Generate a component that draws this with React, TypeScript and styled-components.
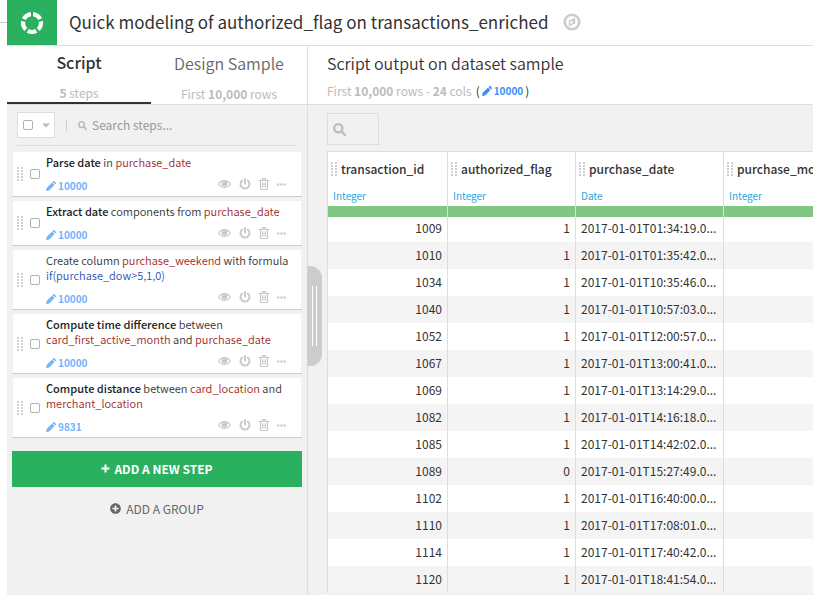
import React from 'react';
import styled, { createGlobalStyle } from 'styled-components';
import { FaCaretDown, FaPlusCircle } from 'react-icons/fa';

const sans = `"Source Sans Pro", "Noto Sans CJK SC", "Noto Sans", sans-serif`;

const GlobalStyle = createGlobalStyle`
  *, *::before, *::after { box-sizing: border-box; }
  html, body, #root { height: 100%; }
  body { margin: 0; background: #fff; color: #333; font: 12px/15px ${sans}; overflow: hidden; }
  button, input { font: inherit; color: inherit; }
  button { background: none; border: 0; padding: 0; cursor: pointer; }
  h1, h2, p, ul { margin: 0; padding: 0; font-weight: 400; }
`;

const Page = styled.div`
  height: 100%;
  display: flex;
  flex-direction: column;
`;

const Header = styled.header`
  display: flex;
  align-items: center;
  height: 46px;
  flex: none;
  border-bottom: 1px solid #ddd;
  margin-left: 7px;
`;

const Logo = styled.a`
  display: grid;
  place-items: center;
  width: 50px;
  height: 45px;
  background: #2ab160;
`;

const FlowLine = styled.span`
  position: absolute;
  left: 0;
  top: 22px;
  width: 7px;
  height: 1px;
  background: #ccc;
`;

const Title = styled.h1`
  margin-left: 12px;
  font-size: 17px;
  line-height: 24px;
  padding-bottom: 2px;
  white-space: nowrap;
`;

const CompassButton = styled.button`
  display: flex;
  margin-left: 15px;
  padding-bottom: 2px;
`;

const Body = styled.div`
  display: flex;
  flex: 1;
  min-height: 0;
  margin-left: 7px;
`;

const ScriptPanel = styled.aside`
  position: relative;
  display: flex;
  flex-direction: column;
  flex: none;
  width: 301px;
  border-right: 1px solid #ddd;
  background: #f1f1f1;
`;

const Tabs = styled.div`
  display: grid;
  grid-template-columns: 144px 1fr;
  height: 59px;
  background: #fff;
  border-bottom: 1px solid #ddd;
`;

const Tab = styled.button<{ $active?: boolean }>`
  display: flex;
  flex-direction: column;
  align-items: center;
  justify-content: flex-start;
  gap: 11px;
  padding-top: ${p => (p.$active ? 4 : 5)}px;
  height: 58px;
  color: ${p => (p.$active ? '#333' : '#666')};
  border-bottom: 2px solid ${p => (p.$active ? '#333' : 'transparent')};
`;

const TabTitle = styled.span<{ $strong?: boolean }>`
  font-size: 16px;
  line-height: 24px;
  font-weight: ${p => (p.$strong ? 500 : 350)};
`;

const Muted = styled.span`
  color: #bbb;
  line-height: 16px;
`;

const Filters = styled.div`
  display: flex;
  align-items: center;
  margin: 0 10px;
  height: 41px;
  border-bottom: 1px solid #ddd;
`;

const SelectMenu = styled.div`
  display: flex;
  align-items: center;
  gap: 7px;
  width: 38px;
  height: 26px;
  padding-left: 5px;
  border: 1px solid #ddd;
  background: #fff;
  color: #bbb;
  button { display: flex; }
`;

const CheckBox = styled.input`
  appearance: none;
  flex: none;
  width: 10px;
  height: 10px;
  margin: 0;
  border: 1px solid #b0b0b0;
  border-radius: 2px;
  background: #fff;
`;

const Divider = styled.span`
  width: 1px;
  height: 11px;
  margin: 0 11px;
  background: #ccc;
`;

const SearchLabel = styled.label`
  display: flex;
  align-items: center;
  gap: 5px;
  flex: 1;
  color: #bbb;
`;

const SearchInput = styled.input`
  min-width: 0;
  flex: 1;
  padding: 0 0 2px;
  border: 0;
  outline: 0;
  background: none;
  &::placeholder { color: #999; opacity: 1; }
`;

const StepList = styled.ul`
  list-style: none;
  display: flex;
  flex-direction: column;
  gap: 4px;
  margin: 6px 5px 0;
`;

const StepItem = styled.li`
  border-bottom: 1px solid #ccc;
`;

const StepCard = styled.div`
  display: flex;
  align-items: center;
  margin: 0 1px;
  padding-left: 4px;
  background: #fff;
`;

const StepBody = styled.div`
  flex: 1;
  min-width: 0;
  margin-left: 6px;
  padding-top: 3px;
`;

const StepCheck = styled(CheckBox)`
  margin-left: 7px;
`;

const StepText = styled.p`
  font-size: 11px;
  font-weight: 350;
  color: #333;
`;

const Strong = styled.span`
  font-weight: 500;
  color: #222;
`;

const ColumnRef = styled.span`
  color: #a31f26;
`;

const Formula = styled.span`
  color: #3050b0;
`;

const StepMeta = styled.div`
  display: flex;
  align-items: flex-end;
  justify-content: space-between;
  height: 26px;
  padding: 0 15px 4px 0;
`;

const Count = styled.span<{ $bright?: boolean }>`
  display: inline-flex;
  align-items: center;
  gap: 2px;
  font-size: 10px;
  line-height: 12px;
  font-weight: 700;
  color: ${p => (p.$bright ? '#3b8ffc' : '#74b4fa')};
`;

const Actions = styled.div`
  display: flex;
  align-items: center;
  gap: 8px;
  height: 16px;
  color: #c8c8c8;
  button { display: flex; }
`;

const AddStep = styled.button`
  display: flex;
  align-items: center;
  justify-content: center;
  gap: 4px;
  flex: none;
  height: 36px;
  margin: 13px 5px 0;
  padding-bottom: 2px;
  background: #2ab160;
  color: #fff;
  font-weight: 700;
`;

const AddGroup = styled.button`
  display: flex;
  align-items: center;
  align-self: center;
  gap: 5px;
  margin-top: 12px;
  height: 18px;
  color: #666;
`;

const PanelHandle = styled.button`
  position: absolute;
  left: 100%;
  top: 220px;
  display: flex;
  justify-content: center;
  gap: 3px;
  width: 15px;
  height: 100px;
  padding: 20px 0;
  border-radius: 0 12px 12px 0;
  background: #ccc;
  &::before, &::after { content: ''; width: 1px; height: 60px; background: #fff; }
`;

const Output = styled.main`
  flex: 1;
  min-width: 0;
  display: flex;
  flex-direction: column;
  background: #f1f1f1;
`;

const OutputHead = styled.div`
  flex: none;
  height: 59px;
  padding: 5px 0 0 19px;
  background: #fff;
  border-bottom: 1px solid #ddd;
`;

const OutputTitle = styled.h2`
  font-size: 16px;
  line-height: 24px;
  font-weight: 350;
`;

const OutputMeta = styled.p`
  display: flex;
  align-items: center;
  gap: 2px;
  margin-top: 8px;
  line-height: 16px;
`;

const Range = styled(Muted)`
  margin-right: 2px;
`;

const OutputBody = styled.div`
  flex: 1;
  min-height: 0;
  padding: 8px 0 0 19px;
  overflow: hidden;
`;

const TableSearch = styled.label`
  display: flex;
  align-items: center;
  width: 52px;
  height: 32px;
  padding-left: 5px;
  margin-bottom: 6px;
  border: 1px solid #ddd;
  color: #bbb;
`;

const Grid = styled.table`
  table-layout: fixed;
  width: 545px;
  border-collapse: separate;
  border-spacing: 0;
  border-top: 1px solid #ddd;
  border-left: 1px solid #ddd;
  background: #fff;
`;

const HeadCell = styled.th<{ $width: number }>`
  width: ${p => p.$width}px;
  height: 65px;
  padding: 0;
  border-right: 1px solid #ddd;
  background: linear-gradient(#81c784, #81c784) bottom / 100% 11px no-repeat #fff;
  text-align: left;
  vertical-align: top;
  font-weight: 500;
  overflow: hidden;
  white-space: nowrap;
`;

const ColumnName = styled.div`
  display: flex;
  align-items: center;
  gap: 4px;
  height: 33px;
  padding-left: 3px;
`;

const ColumnType = styled.div`
  padding: 3px 0 0 5px;
  font-size: 10px;
  font-weight: 400;
  color: #28a9dd;
`;

const Cell = styled.td<{ $right?: boolean }>`
  padding: 0 5px 3px;
  border-right: 1px solid #ddd;
  text-align: ${p => (p.$right ? 'right' : 'left')};
  white-space: nowrap;
  overflow: hidden;
  font-size: 12px;
`;

const Row = styled.tr`
  height: 27px;
  &:first-child { height: 25px; }
  &:first-child ${Cell} { padding-bottom: 4px; }
  &:nth-child(even) { background: #f4f4f4; }
`;

const SearchIcon = ({ size }: { size: number }) => (
  <svg width={size} height={size} viewBox="0 0 13 13" fill="none" stroke="currentColor" aria-hidden="true">
    <circle cx="5.3" cy="5.3" r="4.1" strokeWidth="2.2" />
    <path d="M8.5 8.5L12 12" strokeWidth="2.4" strokeLinecap="round" />
  </svg>
);

const PencilIcon = () => (
  <svg width="10" height="10" viewBox="0 0 10 10" fill="currentColor" aria-hidden="true">
    <path d="M0 10l.6-3.1L6 1.5 8.5 4 3.1 9.4zM6.6.9l.6-.6c.4-.4.9-.4 1.3 0l1.2 1.2c.4.4.4.9 0 1.3l-.6.6z" />
  </svg>
);

const PlusIcon = () => (
  <svg width="9" height="9" viewBox="0 0 9 9" stroke="currentColor" strokeWidth="2" aria-hidden="true">
    <path d="M4.5.5v8M.5 4.5h8" />
  </svg>
);

const Grip = () => (
  <svg width="6" height="16" viewBox="0 0 6 16" fill="#cfcfcf" aria-hidden="true">
    {[0, 3, 6, 9, 12].map(y => (
      <path key={y} d={`M0 ${y + 1}h2v2h-2zM4 ${y + 1}h2v2h-2z`} />
    ))}
  </svg>
);

const EyeIcon = () => (
  <svg width="13" height="10" viewBox="0 0 13 10" aria-hidden="true">
    <path d="M.6 5C3.5.4 9.5.4 12.4 5C9.5 9.6 3.5 9.6.6 5z" fill="none" stroke="currentColor" strokeWidth="1.2" />
    <circle cx="6.5" cy="4.5" r="3" fill="currentColor" />
    <path d="M4.9 4.3A1.6 1.6 0 0 1 6.5 2.7" stroke="#fff" strokeWidth=".6" fill="none" />
  </svg>
);

const PowerIcon = () => (
  <svg width="12" height="12" viewBox="0 0 12 12" fill="none" stroke="currentColor" strokeWidth="1.9" strokeLinecap="round" aria-hidden="true">
    <path d="M3.2 2.6A4.5 4.5 0 1 0 8.8 2.6M6 1v4.6" />
  </svg>
);

const TrashIcon = () => (
  <svg width="10" height="12" viewBox="0 0 10 12" fill="none" stroke="currentColor" aria-hidden="true">
    <path strokeWidth="1.2" d="M0 2.5h10M3 2.5L3.6.7h2.8L7 2.5M1.5 2.5v8c0 .6.3 1 .8 1h5.4c.5 0 .8-.4.8-1v-8" />
    <path strokeWidth=".9" d="M3.5 4.5v5M5 4.5v5M6.5 4.5v5" />
  </svg>
);

const MoreIcon = () => (
  <svg width="9" height="3" viewBox="0 0 9 3" fill="currentColor" aria-hidden="true">
    <path d="M0 .5h2.3v2H0zM3.3.5h2.3v2H3.3zM6.6.5h2.3v2H6.6z" />
  </svg>
);

const CompassIcon = () => (
  <svg width="18" height="18" viewBox="0 0 18 18" aria-hidden="true">
    <circle cx="9" cy="9" r="7.3" fill="none" stroke="#ccc" strokeWidth="2.6" />
    <path d="M12.2 4.6v5.6L5.8 13.4V7.8z" fill="#ccc" />
    <path d="M7.2 8.7v2.6L9.6 10V7.6z" fill="#fff" />
  </svg>
);

const LogoMark = () => (
  <svg width="24" height="24" viewBox="0 0 24 24" fill="none" aria-hidden="true">
    <circle cx="12" cy="12" r="9" stroke="#fff" strokeWidth="4.2" pathLength="100" strokeDasharray="16 4" strokeDashoffset="-17" />
  </svg>
);

type Step = { name: string; text: React.ReactNode; count: string };

const steps: Step[] = [
  { name: 'Parse date', count: '10000', text: <><Strong>Parse date</Strong> in <ColumnRef>purchase_date</ColumnRef></> },
  { name: 'Extract date', count: '10000', text: <><Strong>Extract date</Strong> components from <ColumnRef>purchase_date</ColumnRef></> },
  { name: 'Create column', count: '10000', text: <>Create column <ColumnRef>purchase_weekend</ColumnRef> with formula<br /><Formula>if(purchase_dow&gt;5,1,0)</Formula></> },
  { name: 'Compute time difference', count: '10000', text: <><Strong>Compute time difference</Strong> between<br /><ColumnRef>card_first_active_month</ColumnRef> and <ColumnRef>purchase_date</ColumnRef></> },
  { name: 'Compute distance', count: '9831', text: <><Strong>Compute distance</Strong> between <ColumnRef>card_location</ColumnRef> and<br /><ColumnRef>merchant_location</ColumnRef></> },
];

const columns = [
  { name: 'transaction_id', type: 'Integer', width: 120 },
  { name: 'authorized_flag', type: 'Integer', width: 128 },
  { name: 'purchase_date', type: 'Date', width: 148 },
  { name: 'purchase_month', type: 'Integer', width: 148 },
];

const rows = [
  ['1009', '1', '01:34:19'], ['1010', '1', '01:35:42'], ['1034', '1', '10:35:46'],
  ['1040', '1', '10:57:03'], ['1052', '1', '12:00:57'], ['1067', '1', '13:00:41'],
  ['1069', '1', '13:14:29'], ['1082', '1', '14:16:18'], ['1085', '1', '14:42:02'],
  ['1089', '0', '15:27:49'], ['1102', '1', '16:40:00'], ['1110', '1', '17:08:01'],
  ['1114', '1', '17:40:42'], ['1120', '1', '18:41:54'],
];

const StepRow = ({ step }: { step: Step }) => (
  <StepItem>
    <StepCard>
      <Grip />
      <StepCheck type="checkbox" aria-label={step.name} />
      <StepBody>
        <StepText>{step.text}</StepText>
        <StepMeta>
          <Count><PencilIcon />{step.count}</Count>
          <Actions>
            <button aria-label="Preview"><EyeIcon /></button>
            <button aria-label="Disable"><PowerIcon /></button>
            <button aria-label="Delete"><TrashIcon /></button>
            <button aria-label="More"><MoreIcon /></button>
          </Actions>
        </StepMeta>
      </StepBody>
    </StepCard>
  </StepItem>
);

export default function App() {
  return (
    <Page>
      <GlobalStyle />
      <FlowLine />
      <Header>
        <Logo href="#" aria-label="Flow"><LogoMark /></Logo>
        <Title>Quick modeling of authorized_flag on transactions_enriched</Title>
        <CompassButton aria-label="Navigate"><CompassIcon /></CompassButton>
      </Header>
      <Body>
        <ScriptPanel>
          <Tabs>
            <Tab $active><TabTitle $strong>Script</TabTitle><Muted><b>5</b> steps</Muted></Tab>
            <Tab><TabTitle>Design Sample</TabTitle><Muted>First <b>10,000</b> rows</Muted></Tab>
          </Tabs>
          <Filters>
            <SelectMenu>
              <CheckBox type="checkbox" aria-label="Select all steps" />
              <button aria-label="Selection options"><FaCaretDown size={12} /></button>
            </SelectMenu>
            <Divider />
            <SearchLabel><SearchIcon size={9} /><SearchInput placeholder="Search steps..." aria-label="Search steps" /></SearchLabel>
          </Filters>
          <StepList>{steps.map(s => <StepRow key={s.name} step={s} />)}</StepList>
          <AddStep><PlusIcon />ADD A NEW STEP</AddStep>
          <AddGroup><FaPlusCircle size={11} />ADD A GROUP</AddGroup>
          <PanelHandle aria-label="Resize panel" />
        </ScriptPanel>
        <Output>
          <OutputHead>
            <OutputTitle>Script output on dataset sample</OutputTitle>
            <OutputMeta>
              <Range>First <b>10,000</b> rows - <b>24</b> cols</Range>
              (<Count $bright><PencilIcon />10000</Count>)
            </OutputMeta>
          </OutputHead>
          <OutputBody>
            <TableSearch><SearchIcon size={13} /><SearchInput aria-label="Search columns" /></TableSearch>
            <Grid>
              <thead>
                <tr>
                  {columns.map(c => (
                    <HeadCell key={c.name} $width={c.width}>
                      <ColumnName><Grip />{c.name}</ColumnName>
                      <ColumnType>{c.type}</ColumnType>
                    </HeadCell>
                  ))}
                </tr>
              </thead>
              <tbody>
                {rows.map(([id, flag, time]) => (
                  <Row key={id}>
                    <Cell $right>{id}</Cell>
                    <Cell $right>{flag}</Cell>
                    <Cell>2017-01-01T{time}.0...</Cell>
                    <Cell />
                  </Row>
                ))}
              </tbody>
            </Grid>
          </OutputBody>
        </Output>
      </Body>
    </Page>
  );
}
